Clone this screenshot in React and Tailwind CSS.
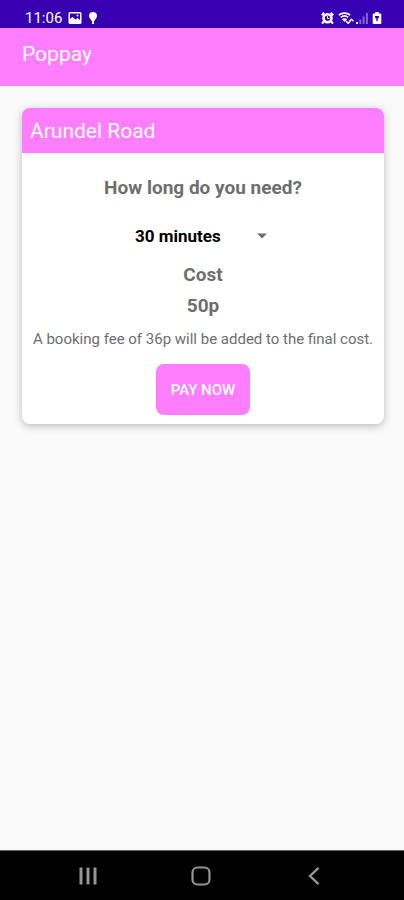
import { useState } from "react";

const durations = [
  { label: "30 minutes", cost: "50p" },
  { label: "1 hour", cost: "£1.00" },
  { label: "2 hours", cost: "£2.00" },
];

function StatusBar() {
  return (
    <div className="flex h-7 items-end justify-between bg-[#3700b3] pr-[22px] pb-0.5 pl-[25px] text-white">
      <div className="flex items-center">
        <span className="text-[15px] leading-4">11:06</span>
        <svg className="ml-1.5 h-3 w-3.5" viewBox="0 0 14 12" aria-hidden="true">
          <path
            fill="currentColor"
            fillRule="evenodd"
            d="M2 0h10a1.5 1.5 0 0 1 1.5 1.5v9A1.5 1.5 0 0 1 12 12H2A1.5 1.5 0 0 1 .5 10.500v-9A1.500 1.500 0 0 1 2 0Zm0 1.500v5.500l2.500-2 3 2.500L9.500 6 12 8V1.500Z"
          />
          <circle cx="9.500" cy="3.600" r="1" fill="currentColor" />
        </svg>
        <svg className="ml-1.5 h-3 w-2.5" viewBox="0 0 10 12" aria-hidden="true">
          <path
            fill="currentColor"
            d="M5 0a4 4 0 0 1 4 4c0 1.800-1.600 2.800-2.200 4.200L6.500 9h-3l-.3-.8C2.600 6.800 1 5.800 1 4a4 4 0 0 1 4-4ZM4 9h2v3H4Z"
          />
        </svg>
      </div>
      <div className="flex items-center gap-1 pb-0.5">
        <svg className="h-3 w-[13px]" viewBox="0 0 13 12" fill="none" stroke="currentColor" aria-hidden="true">
          <circle cx="6.500" cy="6.200" r="4" strokeWidth="2.600" />
          <path d="M6.500 4v2.500h2" strokeWidth="1" />
          <path d="M.8 3.200 3.200.8M9.800.8l2.400 2.400M3 9.500 1 11.500M10 9.500 12 11.500" strokeWidth="2.200" />
        </svg>
        <svg className="h-3 w-4" viewBox="0 0 16 12" fill="none" stroke="currentColor" aria-hidden="true">
          <path d="M.8 3.200C4 .4 9 .4 12.200 3.200M2.800 5.400C5 3.600 8 3.600 10.200 5.400" strokeWidth="1.600" />
          <path d="M4.500 7.200c1.200-.9 2.800-.9 4 0L6.500 9.500Z" fill="currentColor" strokeWidth=".8" />
          <path d="m8 9 2.200 2.200L12.400 9M11.500 9.300l2-2 2 2" strokeWidth="1.600" />
        </svg>
        <svg className="-ml-0.5 h-3 w-3" viewBox="0 0 12 12" fill="currentColor" aria-hidden="true">
          <path d="M0 10h2v2H0Z" />
          <path d="M3.300 7.500h2V12h-2ZM6.600 4.500h2V12h-2ZM9.900 1h2v11h-2Z" opacity=".4" />
        </svg>
        <svg className="h-3 w-2.5" viewBox="0 0 10 12" aria-hidden="true">
          <path
            fill="currentColor"
            fillRule="evenodd"
            d="M3.300 0h3.400v1.500h1.800c.5 0 .8.300.8.800v8.900c0 .5-.3.800-.8.800h-7c-.5 0-.8-.3-.8-.8V2.300c0-.5.300-.8.800-.8h1.800ZM3 4v1.500l1.300 1.300v2.500h1.400V6.800L7 5.500V4Z"
          />
        </svg>
      </div>
    </div>
  );
}

function NavigationBar() {
  return (
    <nav className="grid h-[50px] grid-cols-3 border-t border-[#606060] bg-black pr-[34px] pl-8 text-[#949494]">
      <button type="button" aria-label="Recent apps" className="flex items-center justify-center">
        <svg className="h-5 w-5" viewBox="0 0 20 20" stroke="currentColor" strokeWidth="3" aria-hidden="true">
          <path d="M3 1.500v17M10 1.500v17M17 1.500v17" />
        </svg>
      </button>
      <button type="button" aria-label="Home" className="flex items-center justify-center">
        <svg className="h-5 w-5" viewBox="0 0 20 20" fill="none" stroke="currentColor" strokeWidth="2.200" aria-hidden="true">
          <rect x="1.500" y="1.500" width="17" height="17" rx="5" />
        </svg>
      </button>
      <button type="button" aria-label="Back" className="flex items-center justify-center">
        <svg className="h-5 w-5" viewBox="0 0 20 20" fill="none" stroke="currentColor" strokeWidth="2.400" aria-hidden="true">
          <path d="M14.500 1.800 6 10l8.500 8.200" />
        </svg>
      </button>
    </nav>
  );
}

export default function App() {
  const [selected, setSelected] = useState(0);

  return (
    <div className="flex min-h-screen flex-col bg-[#fafafa] font-[Roboto,sans-serif]">
      <StatusBar />
      <header className="bg-[#ff7dff] px-[22px] pt-3 pb-[18px]">
        <h1 className="text-[21px] leading-7 text-white">Poppay</h1>
      </header>

      <main className="flex-1 pt-[22px] pr-5 pl-[22px]">
        <section className="overflow-hidden rounded-lg bg-white shadow-[0_2px_8px_rgba(0,0,0,0.26)]">
          <h2 className="bg-[#ff7dff] px-2 pt-[9px] pb-2 text-[21px] leading-7 text-white">Arundel Road</h2>
          <form
            className="flex flex-col items-center pt-[23px] pb-[9px] text-[#6e6e6e]"
            onSubmit={(event) => event.preventDefault()}
          >
            <label htmlFor="duration" className="text-[19px] leading-6 font-bold">
              How long do you need?
            </label>
            <div className="mt-6 grid w-[152px] items-center">
              <select
                id="duration"
                value={selected}
                onChange={(event) => setSelected(Number(event.target.value))}
                className="col-start-1 row-start-1 w-full appearance-none bg-transparent pr-6 pl-2 text-[17px] leading-6 font-bold text-black"
              >
                {durations.map((duration, index) => (
                  <option key={duration.label} value={index}>
                    {duration.label}
                  </option>
                ))}
              </select>
              <svg
                className="pointer-events-none col-start-1 row-start-1 mr-3 h-1.5 w-2.5 justify-self-end"
                viewBox="0 0 10 6"
                aria-hidden="true"
              >
                <path d="M0 .5h10l-5 5Z" fill="#707070" />
              </svg>
            </div>
            <h3 className="mt-[15px] text-[19px] leading-6 font-bold">Cost</h3>
            <output htmlFor="duration" className="mt-[7px] text-[19px] leading-6 font-bold">
              {durations[selected].cost}
            </output>
            <p className="mt-[11px] text-[15px] leading-5">A booking fee of 36p will be added to the final cost.</p>
            <button
              type="submit"
              className="mt-[15px] rounded-lg bg-[#ff7dff] px-[15px] pt-4 pb-3.5 text-[15px] leading-[21px] font-medium text-white"
            >
              PAY NOW
            </button>
          </form>
        </section>
      </main>

      <NavigationBar />
    </div>
  );
}
